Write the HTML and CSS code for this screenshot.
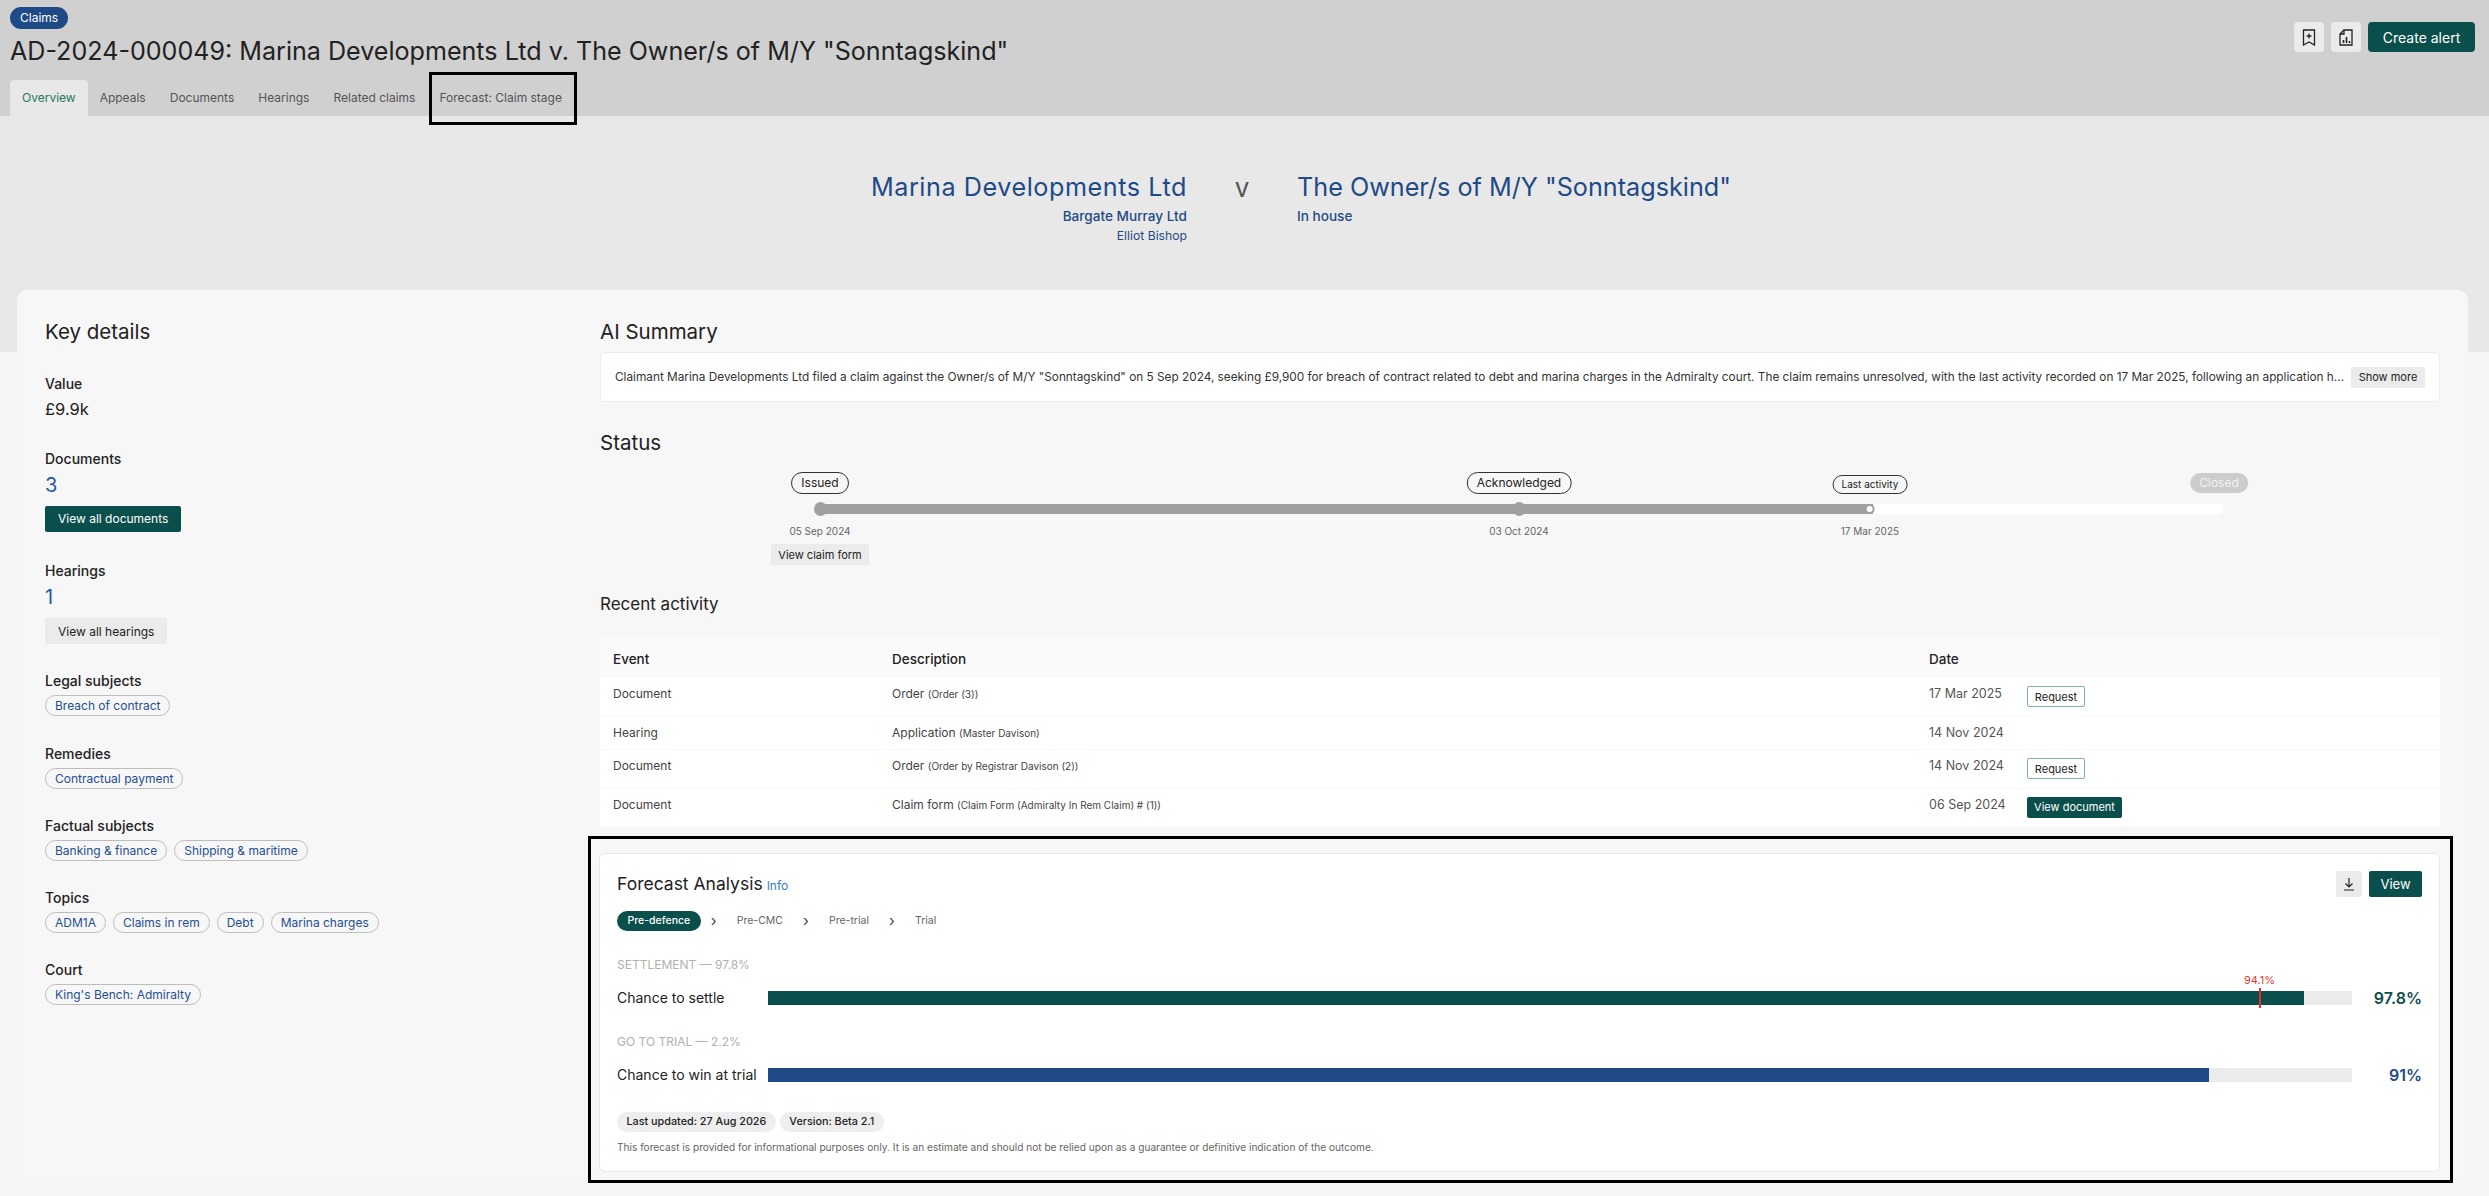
FILE: index.html
```html
<!DOCTYPE html>
<html lang="en">
<head>
  <meta charset="UTF-8">
  <meta name="viewport" content="width=device-width, initial-scale=1.0">
  <title>AD-2024-000049</title>
  <link rel="stylesheet" href="styles.css">
</head>
<body>
  <header class="top">
    <div class="top-main">
      <span class="badge">Claims</span>
      <h1 class="claim-title">AD-2024-000049: Marina Developments Ltd v. The Owner/s of M/Y "Sonntagskind"</h1>
      <nav class="tabs">
        <a class="tab active">Overview</a>
        <a class="tab">Appeals</a>
        <a class="tab">Documents</a>
        <a class="tab">Hearings</a>
        <a class="tab">Related claims</a>
        <a class="tab tab-marked">Forecast: Claim stage</a>
      </nav>
    </div>
    <div class="top-actions">
      <button class="icon-btn" aria-label="Bookmark">
        <svg width="14" height="17" viewBox="0 0 14 17" fill="none" stroke="#222" stroke-width="1.3"><path d="M1.5 1h11v15L7 13l-5.500 3z"/><path d="M7 4.500v5M4.500 7h5"/></svg>
      </button>
      <button class="icon-btn" aria-label="Report">
        <svg width="14" height="17" viewBox="0 0 14 17" fill="none" stroke="#222" stroke-width="1.3"><path d="M5 1h8v15H1V5z"/><path d="M5 1v4H1"/><path d="M4.500 14v-3M7.500 14V8M10.500 14v-2" stroke-width="1.600"/></svg>
      </button>
      <button class="btn-primary btn-alert">Create alert</button>
    </div>
  </header>

  <section class="hero">
    <div class="parties">
      <div class="party party-left">
        <h2 class="party-name">Marina Developments Ltd</h2>
        <div class="party-firm">Bargate Murray Ltd</div>
        <div class="party-person">Elliot Bishop</div>
      </div>
      <div class="versus">v</div>
      <div class="party">
        <h2 class="party-name">The Owner/s of M/Y "Sonntagskind"</h2>
        <div class="party-firm">In house</div>
      </div>
    </div>
  </section>

  <main class="card">
    <aside class="details">
      <h2 class="section-title">Key details</h2>
      <div class="detail first">
        <div class="detail-label">Value</div>
        <div class="detail-value">£9.9k</div>
      </div>
      <div class="detail">
        <div class="detail-label">Documents</div>
        <div class="detail-count">3</div>
        <button class="btn-primary btn-side">View all documents</button>
      </div>
      <div class="detail">
        <div class="detail-label">Hearings</div>
        <div class="detail-count">1</div>
        <button class="btn-grey btn-side">View all hearings</button>
      </div>
      <div class="detail tight">
        <div class="detail-label">Legal subjects</div>
        <div class="chips"><span class="chip">Breach of contract</span></div>
      </div>
      <div class="detail tight">
        <div class="detail-label">Remedies</div>
        <div class="chips"><span class="chip">Contractual payment</span></div>
      </div>
      <div class="detail tight">
        <div class="detail-label">Factual subjects</div>
        <div class="chips"><span class="chip">Banking &amp; finance</span><span class="chip">Shipping &amp; maritime</span></div>
      </div>
      <div class="detail tight">
        <div class="detail-label">Topics</div>
        <div class="chips"><span class="chip">ADM1A</span><span class="chip">Claims in rem</span><span class="chip">Debt</span><span class="chip">Marina charges</span></div>
      </div>
      <div class="detail tight">
        <div class="detail-label">Court</div>
        <div class="chips"><span class="chip">King's Bench: Admiralty</span></div>
      </div>
    </aside>

    <div class="content">
      <h2 class="section-title">AI Summary</h2>
      <div class="summary">
        <p class="summary-text">Claimant Marina Developments Ltd filed a claim against the Owner/s of M/Y "Sonntagskind" on 5 Sep 2024, seeking £9,900 for breach of contract related to debt and marina charges in the Admiralty court. The claim remains unresolved, with the last activity recorded on 17 Mar 2025, following an application h...</p>
        <button class="btn-grey btn-more">Show more</button>
      </div>

      <h2 class="section-title status-title">Status</h2>
      <div class="timeline">
        <div class="timeline-inner">
          <div class="track"><div class="track-fill"></div></div>
          <div class="stop" style="left: 0%">
            <div class="stop-label"><span class="stage">Issued</span></div>
            <span class="dot"></span>
            <div class="stop-date">05 Sep 2024</div>
            <button class="btn-grey btn-form">View claim form</button>
          </div>
          <div class="stop" style="left: 49.96%">
            <div class="stop-label"><span class="stage">Acknowledged</span></div>
            <span class="dot"></span>
            <div class="stop-date">03 Oct 2024</div>
          </div>
          <div class="stop" style="left: 75.05%">
            <div class="stop-label"><span class="stage stage-small">Last activity</span></div>
            <span class="dot dot-current"></span>
            <div class="stop-date">17 Mar 2025</div>
          </div>
          <div class="stop" style="left: 100%">
            <div class="stop-label"><span class="stage stage-off">Closed</span></div>
          </div>
        </div>
      </div>

      <h3 class="activity-title">Recent activity</h3>
      <table class="activity">
        <colgroup><col class="col-event"><col class="col-desc"><col class="col-date"><col></colgroup>
        <thead>
          <tr><th>Event</th><th>Description</th><th>Date</th><th></th></tr>
        </thead>
        <tbody>
          <tr>
            <td>Document</td>
            <td>Order <small>(Order (3))</small></td>
            <td class="date">17 Mar 2025</td>
            <td><button class="btn-outline">Request</button></td>
          </tr>
          <tr>
            <td>Hearing</td>
            <td>Application <small>(Master Davison)</small></td>
            <td class="date">14 Nov 2024</td>
            <td></td>
          </tr>
          <tr>
            <td>Document</td>
            <td>Order <small>(Order by Registrar Davison (2))</small></td>
            <td class="date">14 Nov 2024</td>
            <td><button class="btn-outline">Request</button></td>
          </tr>
          <tr>
            <td>Document</td>
            <td>Claim form <small>(Claim Form (Admiralty In Rem Claim) # (1))</small></td>
            <td class="date">06 Sep 2024</td>
            <td><button class="btn-primary btn-doc">View document</button></td>
          </tr>
        </tbody>
      </table>

      <div class="forecast-mark">
        <section class="forecast">
          <div class="forecast-head">
            <div class="forecast-title"><h2>Forecast Analysis</h2><a class="info">Info</a></div>
            <div class="forecast-actions">
              <button class="btn-grey btn-download" aria-label="Download">
                <svg width="12" height="14" viewBox="0 0 12 14" fill="none" stroke="#222" stroke-width="1.200"><path d="M6 1v8.500M2.500 6.500L6 10l3.500-3.500M1 13h10"/></svg>
              </button>
              <button class="btn-primary btn-view">View</button>
            </div>
          </div>
          <div class="stepper">
            <span class="step step-on">Pre-defence</span><span class="chev">&#8250;</span>
            <span class="step">Pre-CMC</span><span class="chev">&#8250;</span>
            <span class="step">Pre-trial</span><span class="chev">&#8250;</span>
            <span class="step">Trial</span>
          </div>
          <div class="bar-heading">SETTLEMENT — 97.8%</div>
          <div class="bar-row">
            <div class="bar-label">Chance to settle</div>
            <div class="bar">
              <div class="bar-fill fill-teal" style="width: 97%"></div>
              <div class="marker" style="left: 94.1%"><span class="marker-label">94.1%</span></div>
            </div>
            <div class="bar-value teal">97.8%</div>
          </div>
          <div class="bar-heading">GO TO TRIAL — 2.2%</div>
          <div class="bar-row">
            <div class="bar-label">Chance to win at trial</div>
            <div class="bar">
              <div class="bar-fill fill-blue" style="width: 91%"></div>
            </div>
            <div class="bar-value blue">91%</div>
          </div>
          <div class="meta">
            <span class="meta-pill">Last updated: 27 Aug 2026</span>
            <span class="meta-pill">Version: Beta 2.1</span>
          </div>
          <p class="disclaimer">This forecast is provided for informational purposes only. It is an estimate and should not be relied upon as a guarantee or definitive indication of the outcome.</p>
        </section>
      </div>
    </div>
  </main>
</body>
</html>
```

FILE: styles.css
```css
* {
  box-sizing: border-box;
}
html, body {
  margin: 0;
  padding: 0;
}
body {
  font-family: Inter, "Liberation Sans", sans-serif;
  background-color: #f6f6f6;
  color: #222;
  font-size: 13px;
  overflow: hidden;
}
h1, h2, h3, p {
  margin: 0;
  font-weight: 400;
}
button {
  font-family: inherit;
  border: none;
  cursor: pointer;
  padding: 0;
}

/* top bar */
.top {
  display: flex;
  justify-content: space-between;
  height: 116px;
  background-color: #d0d0d0;
  padding: 7px 14px 0 10px;
}
.badge {
  display: inline-block;
  height: 22px;
  line-height: 22px;
  padding: 0 10px;
  border-radius: 11px;
  background-color: #1e4a87;
  color: #fff;
  font-size: 12px;
}
.claim-title {
  font-size: 25.100px;
  line-height: 34px;
  height: 34px;
  margin-top: 5px;
  color: #222;
  white-space: nowrap;
}
.tabs {
  display: flex;
  margin-top: 12px;
}
.tab {
  position: relative;
  height: 36px;
  line-height: 36px;
  padding: 0 12px;
  font-size: 12px;
  color: #555;
  border-radius: 4px 4px 0 0;
  white-space: nowrap;
}
.tab.active {
  background-color: #e8e8e8;
  color: #1f7a5a;
}
.tab-marked::after {
  content: "";
  position: absolute;
  left: 2px;
  right: -3px;
  top: -8px;
  bottom: -9px;
  border: 3px solid #000;
}
.top-actions {
  display: flex;
  gap: 7px;
  padding-top: 15px;
}
.icon-btn {
  width: 30px;
  height: 30px;
  background-color: #ebebeb;
  border-radius: 4px;
  display: flex;
  align-items: center;
  justify-content: center;
}
.btn-primary {
  background-color: #0b4f4c;
  color: #fff;
  border-radius: 2px;
}
.btn-grey {
  background-color: #ebebeb;
  color: #222;
  border-radius: 2px;
}
.btn-alert {
  width: 107px;
  height: 30px;
  font-size: 14px;
  border-radius: 4px;
}

/* parties */
.hero {
  height: 236px;
  background-color: #e8e8e8;
  padding: 54px 5px 0 0;
}
.parties {
  display: grid;
  grid-template-columns: 1fr 110px 1fr;
  color: #1e4a87;
}
.party-left {
  text-align: right;
}
.party-name {
  font-size: 25.200px;
  line-height: 34px;
}
.party-left .party-name {
  letter-spacing: 0.55px;
}
.party-firm {
  font-size: 13.600px;
  font-weight: 500;
  line-height: 18px;
  margin-top: 3px;
}
.party-person {
  font-size: 12.200px;
  line-height: 18px;
  margin-top: 2px;
}
.versus {
  font-size: 26px;
  line-height: 36px;
  text-align: center;
  color: #555;
}

/* main card */
.card {
  display: grid;
  grid-template-columns: 555px minmax(0, 1fr);
  margin: -62px 21px 0 17px;
  padding: 28px 28px 0;
  background-color: #f7f7f7;
  border-radius: 10px 10px 0 0;
}
.section-title {
  font-size: 20.500px;
  line-height: 28px;
  color: #222;
}
.detail {
  margin-top: 30.500px;
}
.detail.first {
  margin-top: 29px;
}
.detail.tight {
  margin-top: 28.300px;
}
.detail-label {
  font-size: 14px;
  font-weight: 500;
  line-height: 17px;
  color: #222;
}
.detail-value {
  font-size: 16.500px;
  line-height: 20px;
  margin-top: 7px;
}
.detail-count {
  font-size: 20px;
  line-height: 24px;
  margin-top: 6px;
  color: #1f5aa8;
}
.btn-side {
  display: block;
  height: 26px;
  padding: 0 13px;
  margin-top: 9px;
  font-size: 12px;
}
.chips {
  display: flex;
  gap: 7px;
  margin-top: 6px;
}
.chip {
  height: 21px;
  line-height: 19px;
  padding: 0 9px;
  border: 1px solid #bdbdbd;
  border-radius: 11px;
  font-size: 12px;
  color: #1e4f96;
  white-space: nowrap;
}

/* right column */
.summary {
  display: flex;
  align-items: center;
  justify-content: space-between;
  height: 50px;
  margin-top: 6px;
  padding: 0 14px;
  background-color: #fff;
  border: 1px solid #ececec;
  border-radius: 4px;
}
.summary-text {
  font-size: 11.800px;
  white-space: nowrap;
  color: #333;
}
.btn-more {
  flex: none;
  width: 74px;
  height: 21px;
  font-size: 11px;
}
.status-title {
  margin-top: 27px;
}
.timeline {
  height: 93px;
  margin-top: 15px;
  padding: 0 221px 0 220px;
}
.timeline-inner {
  position: relative;
  height: 100%;
}
.track {
  position: absolute;
  left: -5px;
  right: -5px;
  top: 32px;
  height: 10px;
  background-color: #fff;
  border-radius: 5px;
}
.track-fill {
  width: 75.100%;
  height: 100%;
  background-color: #a0a0a0;
  border-radius: 5px 0 0 5px;
}
.stop {
  position: absolute;
  top: 0;
  display: flex;
  flex-direction: column;
  align-items: center;
  transform: translateX(-50%);
  white-space: nowrap;
}
.stop-label {
  height: 22px;
  display: flex;
  align-items: flex-end;
}
.stage {
  height: 22px;
  line-height: 20px;
  padding: 0 9px;
  border: 1px solid #333;
  border-radius: 11px;
  font-size: 12px;
}
.stage-small {
  height: 19px;
  line-height: 17px;
  font-size: 10px;
  padding: 0 8px;
}
.stage-off {
  height: 20px;
  line-height: 20px;
  margin-bottom: 1px;
  border: none;
  background-color: #ccc;
  color: #f2f2f2;
}
.dot {
  width: 13px;
  height: 14px;
  margin-top: 8px;
  border-radius: 50%;
  background-color: #a0a0a0;
}
.dot-current {
  width: 10px;
  height: 10px;
  margin-top: 10px;
  margin-bottom: 2px;
  background-color: #fff;
  border: 2px solid #a0a0a0;
}
.stop-date {
  font-size: 10px;
  line-height: 14px;
  margin-top: 8px;
  color: #666;
}
.btn-form {
  width: 98px;
  height: 21px;
  margin-top: 6px;
  font-size: 11px;
}
.activity-title {
  font-size: 17px;
  line-height: 24px;
  margin-top: 27px;
}

/* activity table */
.activity {
  width: 100%;
  table-layout: fixed;
  border-collapse: collapse;
  margin-top: 20px;
}
.col-event {
  width: 279px;
}
.col-desc {
  width: 1037px;
}
.col-date {
  width: 98px;
}
.activity th {
  height: 42px;
  padding: 3px 13px 0;
  background-color: #fafafa;
  text-align: left;
  font-size: 13.500px;
  font-weight: 500;
}
.activity td {
  padding: 8px 13px 8.500px;
  background-color: #fff;
  border-bottom: 1px solid #f7f7f7;
  vertical-align: top;
  line-height: 15px;
  font-size: 12px;
  color: #444;
}
.activity small {
  font-size: 10px;
  color: #444;
}
.activity td.date {
  font-size: 12.500px;
  color: #555;
  white-space: nowrap;
}
.btn-outline {
  display: block;
  width: 58px;
  height: 21px;
  background-color: #fff;
  border: 1px solid #7fb3a2;
  border-radius: 2px;
  font-size: 11px;
  color: #222;
}
.btn-doc {
  display: block;
  width: 95px;
  height: 21px;
  font-size: 11px;
}

/* forecast */
.forecast-mark {
  margin: 8.500px -13px 0 -12px;
  padding: 14px 10px 8px 8px;
  border: 3px solid #000;
}
.forecast {
  padding: 17px;
  background-color: #fff;
  border: 1px solid #e8e8e8;
  border-radius: 6px;
}
.forecast-head {
  display: flex;
  justify-content: space-between;
  height: 26px;
}
.forecast-title {
  display: flex;
  align-items: baseline;
  gap: 4px;
}
.forecast-title h2 {
  font-size: 17.500px;
  line-height: 26px;
}
.info {
  font-size: 12px;
  color: #3b7cc9;
}
.forecast-actions {
  display: flex;
  gap: 7px;
}
.btn-download {
  width: 26px;
  height: 26px;
  display: flex;
  align-items: center;
  justify-content: center;
}
.btn-view {
  width: 53px;
  height: 26px;
  font-size: 13px;
}
.stepper {
  display: flex;
  align-items: center;
  height: 20px;
  margin-top: 14px;
  font-size: 10.500px;
  color: #666;
}
.step-on {
  height: 20px;
  line-height: 20px;
  padding: 0 10.500px;
  margin-right: -10px;
  border-radius: 10px;
  background-color: #0b4f4c;
  color: #fff;
  font-weight: 500;
}
.chev {
  width: 46px;
  text-align: center;
  font-size: 15px;
  color: #444;
}
.bar-heading {
  font-size: 12px;
  line-height: 16px;
  margin-top: 26px;
  color: #b0b0b0;
}
.bar-row {
  display: flex;
  align-items: center;
  height: 20px;
  margin-top: 15px;
}
.bar-label {
  flex: none;
  width: 151px;
  font-size: 14px;
  white-space: nowrap;
}
.bar {
  position: relative;
  flex: 1;
  height: 14px;
  background-color: #ebebeb;
}
.bar-fill {
  height: 100%;
}
.fill-teal {
  background-color: #0b4f4c;
}
.fill-blue {
  background-color: #1e4a87;
}
.marker {
  position: absolute;
  top: -3px;
  bottom: -3px;
  width: 2px;
  background-color: #e03131;
}
.marker-label {
  position: absolute;
  bottom: 21px;
  left: 1px;
  transform: translateX(-50%);
  font-size: 11px;
  line-height: 13px;
  color: #e53935;
}
.bar-value {
  flex: none;
  width: 70px;
  text-align: right;
  font-size: 16px;
  font-weight: 600;
}
.teal {
  color: #0b4f4c;
}
.blue {
  color: #1e4a87;
}
.meta {
  display: flex;
  gap: 4px;
  margin-top: 27px;
}
.meta-pill {
  height: 20px;
  line-height: 20px;
  padding: 0 9.500px;
  border-radius: 10px;
  background-color: #eee;
  font-size: 10.800px;
  font-weight: 500;
}
.disclaimer {
  font-size: 10.150px;
  line-height: 14px;
  margin-top: 8px;
  color: #666;
}
```
